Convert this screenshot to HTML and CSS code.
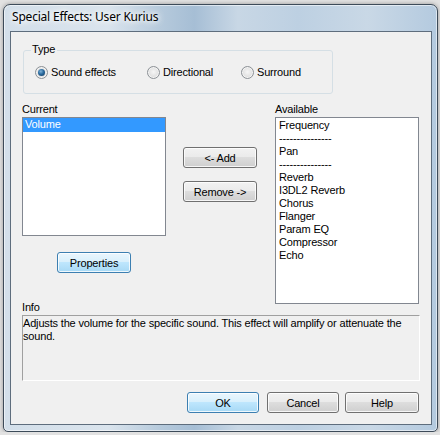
FILE: index.html
```html
<!DOCTYPE html>
<html>
<head>
<meta charset="utf-8">
<link rel="stylesheet" href="styles.css">
</head>
<body>
<div class="window">
  <div class="titlebar"><span class="title">Special Effects: User Kurius</span></div>
  <div class="client">
    <div class="group">
      <span class="group-label">Type</span>
      <label class="opt opt1"><span class="radio on"></span>Sound effects</label>
      <label class="opt opt2"><span class="radio"></span>Directional</label>
      <label class="opt"><span class="radio"></span>Surround</label>
    </div>
    <div class="main">
      <div class="col">
        <div class="lbl">Current</div>
        <div class="list cur"><div class="item sel">Volume</div></div>
        <button class="btn blue props">Properties</button>
        <div class="lbl info-lbl">Info</div>
      </div>
      <div class="col mid">
        <button class="btn">&lt;- Add</button>
        <button class="btn">Remove -&gt;</button>
      </div>
      <div class="col">
        <div class="lbl">Available</div>
        <div class="list avail">
          <div class="item">Frequency</div>
          <div class="item">---------------</div>
          <div class="item">Pan</div>
          <div class="item">---------------</div>
          <div class="item">Reverb</div>
          <div class="item">I3DL2 Reverb</div>
          <div class="item">Chorus</div>
          <div class="item">Flanger</div>
          <div class="item">Param EQ</div>
          <div class="item">Compressor</div>
          <div class="item">Echo</div>
        </div>
      </div>
    </div>
    <div class="info">Adjusts the volume for the specific sound. This effect will amplify or attenuate the sound.</div>
    <div class="actions">
      <button class="btn blue ok">OK</button>
      <button class="btn cancel">Cancel</button>
      <button class="btn help">Help</button>
    </div>
  </div>
</div>
</body>
</html>
```
FILE: styles.css
```css
body {
  margin: 0;
  background: #e2e2e2;
  font-family: "Liberation Sans", Arial, sans-serif;
  font-size: 11px;
  letter-spacing: -0.17px;
  color: #000;
}
.window {
  margin: 4px 0 0 3px;
  width: 435px;
  height: 428px;
  box-sizing: border-box;
  border: 1px solid #3d4b59;
  border-radius: 7px 7px 5px 5px;
  display: flex;
  flex-direction: column;
  background: linear-gradient(to right, #d3dfea 0%, #dae4ed 24%, #b6cadc 36%, #a6bed5 44%, #c8d7e5 54%, #bdd0e2 68%, #c9d8e6 84%, #b4cadf 100%);
  box-shadow: 0 0 4px rgba(0,0,0,0.35), inset 0 0 0 1px rgba(255,255,255,0.55);
}
.titlebar {
  height: 26px;
  box-sizing: border-box;
  padding: 4px 0 0 8px;
}
.title {
  font-family: "Noto Sans", sans-serif;
  font-size: 12px;
  letter-spacing: -0.2px;
  line-height: 16px;
  color: #000;
  text-shadow: 0 0 8px #fff, 0 0 8px #fff, 0 0 4px #fff;
}
.client {
  flex: 1;
  margin: 0 5px 6px 6px;
  border: 1px solid #5e6d7d;
  background: #f0f0f0;
  padding: 18px 11px 0 11px;
}
.group {
  position: relative;
  margin-left: 1px;
  width: 310px;
  height: 44px;
  box-sizing: border-box;
  border: 1px solid #d5dfe5;
  border-radius: 3px;
  display: flex;
  align-items: center;
  padding-left: 11px;
}
.group-label {
  position: absolute;
  top: -8px;
  left: 7px;
  padding: 0 2px 0 1px;
  line-height: 13px;
  background: #f0f0f0;
}
.opt {
  display: flex;
  align-items: center;
  line-height: 13px;
}
.opt1 { width: 112px; }
.opt2 { width: 94px; }
.radio {
  width: 13px;
  height: 13px;
  box-sizing: border-box;
  margin-right: 3px;
  border-radius: 50%;
  border: 1px solid #8c9196;
  background: radial-gradient(circle at 50% 45%, #f6f6f6 0, #e2e2e2 55%, #c9c9c9 100%);
  box-shadow: inset 0 0 0 1px #f4f4f4;
  display: flex;
  align-items: center;
  justify-content: center;
}
.radio.on::after {
  content: "";
  width: 7px;
  height: 7px;
  border-radius: 50%;
  background: radial-gradient(circle at 40% 35%, #7fb2d8 0, #2a6a9e 45%, #0f3559 100%);
}
.main {
  display: grid;
  grid-template-columns: 144px 75px 144px;
  column-gap: 17px;
  margin-top: 9px;
}
.col {
  display: flex;
  flex-direction: column;
}
.lbl {
  height: 13px;
  line-height: 13px;
  margin-bottom: 1px;
}
.list {
  background: #fff;
  border: 1px solid #828790;
  box-sizing: border-box;
}
.item {
  height: 13px;
  line-height: 13px;
  white-space: nowrap;
}
.cur { height: 119px; }
.cur .item { padding-left: 2px; }
.sel {
  background: #3399ff;
  color: #fff;
  height: 14px;
}
.avail {
  height: 187px;
  margin-bottom: 11px;
  padding: 1px 0 0 3px;
}
.info-lbl {
  margin-top: auto;
  margin-bottom: 1px;
}
.mid {
  padding-top: 44px;
  gap: 13px;
}
.btn {
  width: 74px;
  height: 21px;
  box-sizing: border-box;
  padding: 0;
  border: 1px solid #707070;
  border-radius: 3px;
  font: inherit;
  letter-spacing: inherit;
  color: #000;
  background: linear-gradient(#f2f2f2 0, #ebebeb 45%, #dddddd 50%, #cfcfcf 100%);
  box-shadow: inset 0 0 0 1px rgba(255,255,255,0.8);
}
.btn.blue {
  border-color: #3c7fb1;
  background: linear-gradient(#eaf6fd 0, #d9f0fc 45%, #bee6fd 50%, #a7d9f5 100%);
}
.props {
  margin: 16px auto 0;
}
.info {
  height: 66px;
  box-sizing: border-box;
  border-top: 1px solid #a0a0a0;
  border-left: 1px solid #a0a0a0;
  border-right: 1px solid #fff;
  border-bottom: 1px solid #fff;
  padding-top: 1px;
  line-height: 13px;
}
.actions {
  display: flex;
  justify-content: flex-end;
  margin-top: 11px;
  padding-right: 1px;
}
.actions .ok { width: 72px; margin-right: 8px; }
.actions .cancel { width: 72px; margin-right: 6px; }
.actions .help { width: 74px; }
```
